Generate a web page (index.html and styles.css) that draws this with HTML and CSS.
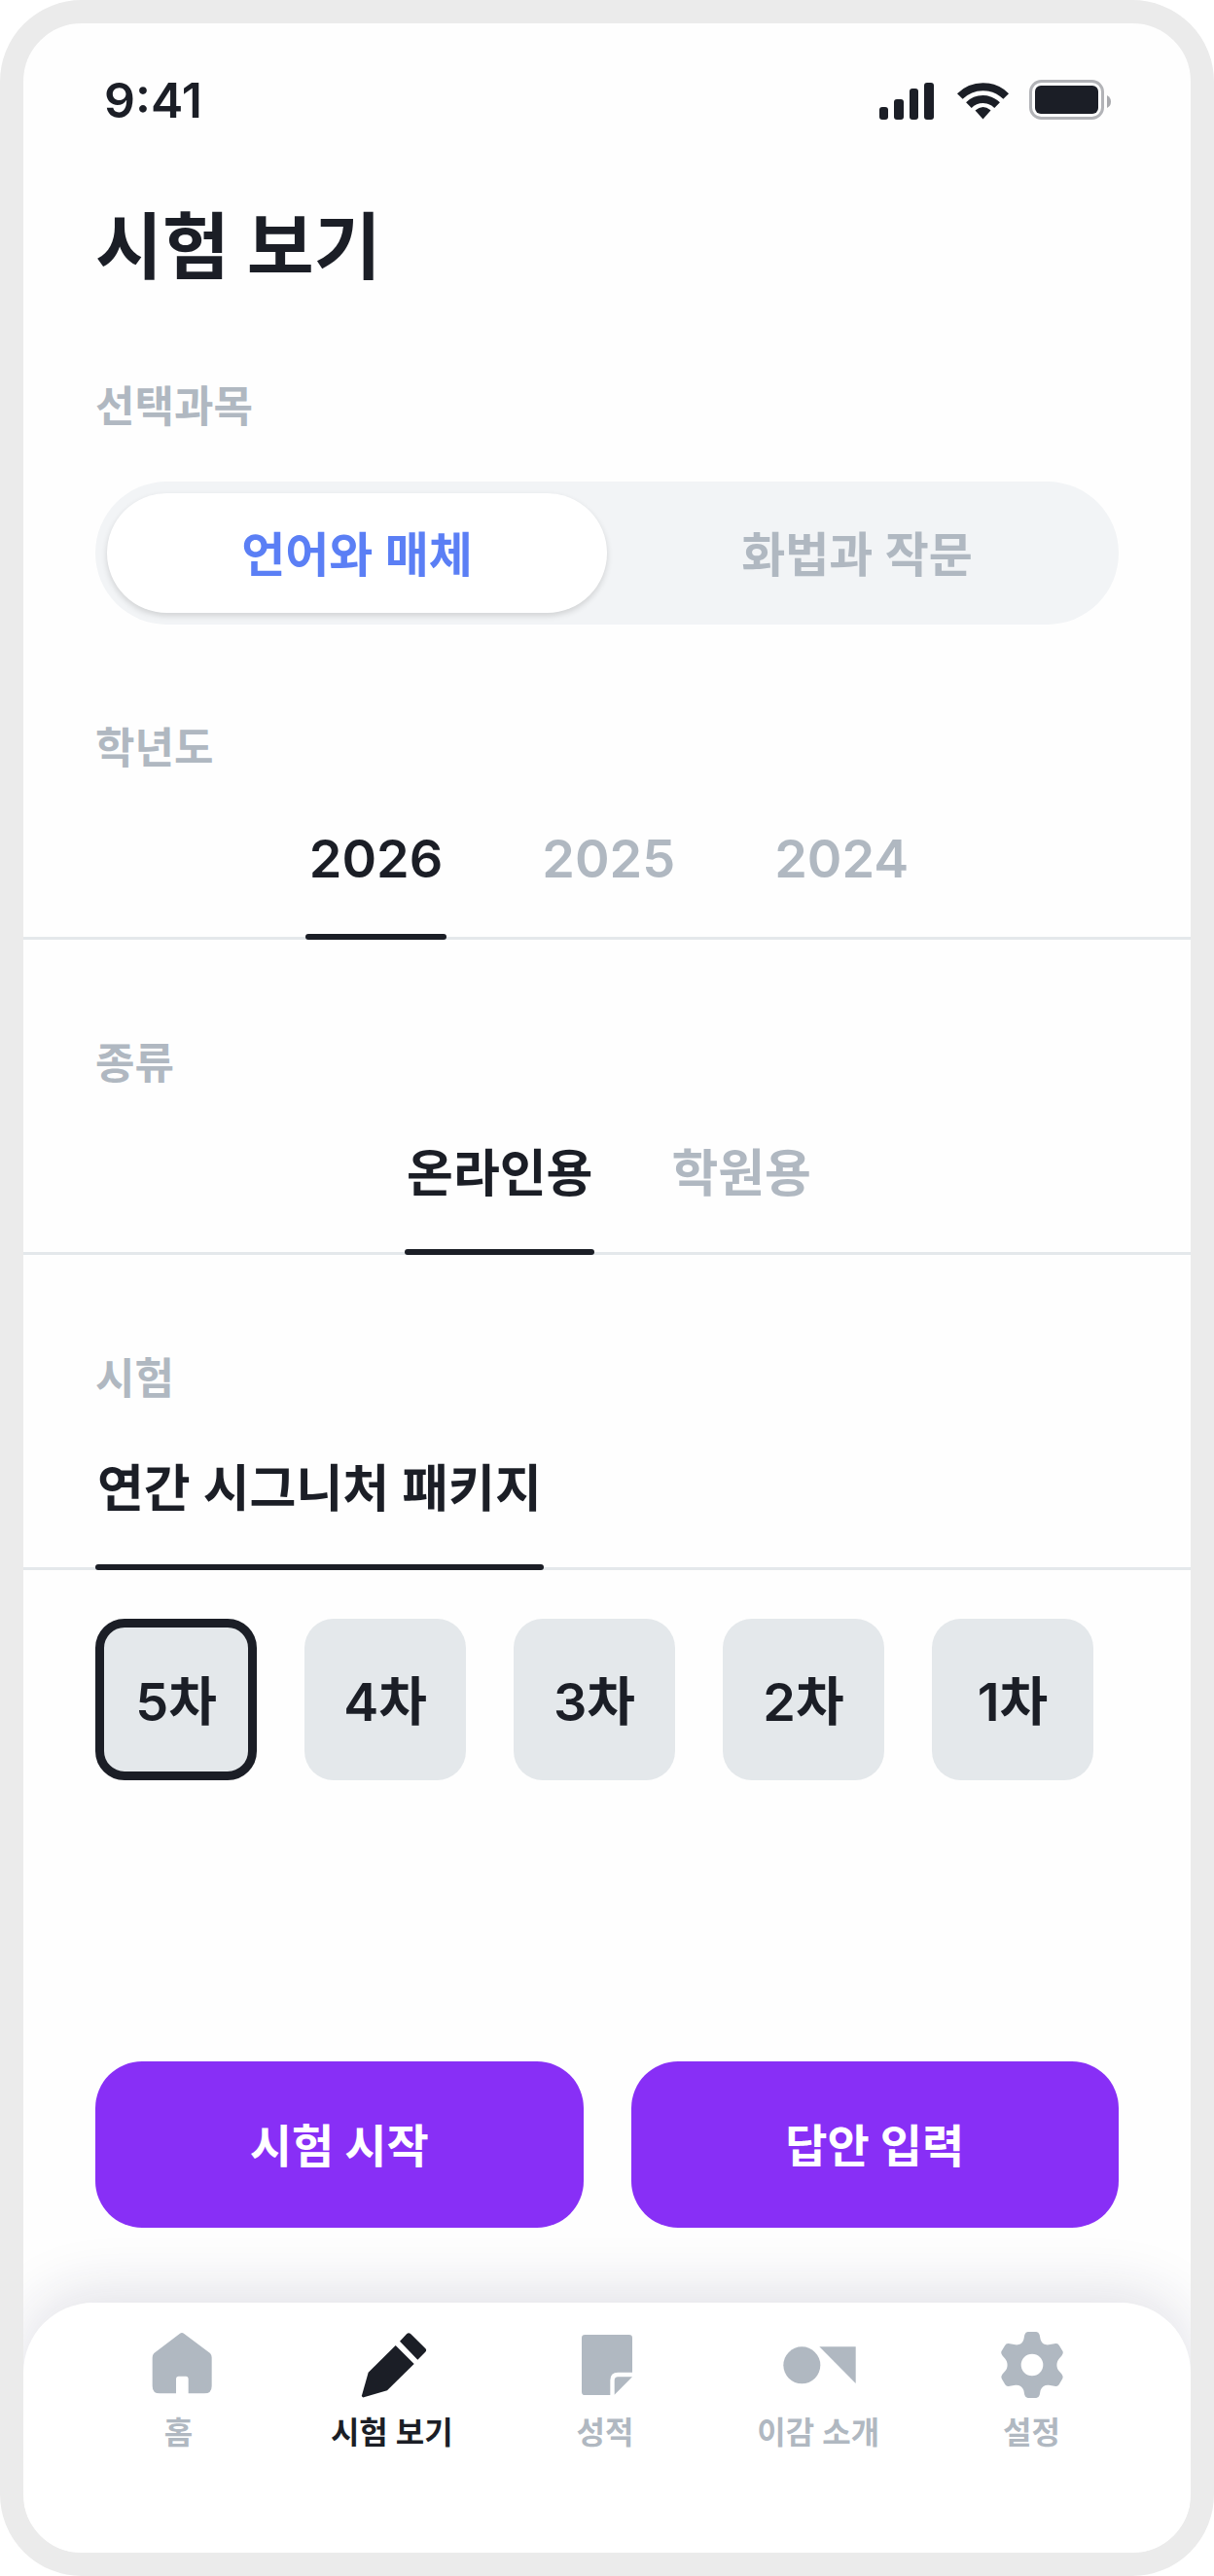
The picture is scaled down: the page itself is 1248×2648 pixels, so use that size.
FILE: index.html
```html
<!DOCTYPE html>
<html lang="ko">
  <head>
    <meta charset="UTF-8">
    <meta name="viewport" content="width=device-width, initial-scale=1.0">
    <title>시험 보기</title>
    <link rel="stylesheet" href="styles.css">
  </head>
  <body>
  <div class="phone">
    <div class="status-bar">
      <span class="time">9:41</span>
      <svg class="status-icons" viewBox="0 0 240 42" aria-hidden="true">
        <!-- signal -->
        <rect x="0" y="28" width="9" height="13" rx="3"/>
        <rect x="15" y="20" width="10" height="21" rx="3"/>
        <rect x="31" y="9" width="9" height="32" rx="3"/>
        <rect x="46" y="3" width="10" height="38" rx="3"/>
        <!-- wifi -->
        <path class="wave" d="M82.8 17A33.5 33.5 0 0 1 130.2 17M91.9 26.1A20.7 20.7 0 0 1 121.1 26.1"/>
        <path d="M106.5 40.5L98.5 31.5Q106.5 24.5 114.5 31.5Z"/>
        <!-- battery -->
        <rect class="battery" x="155.500" y="1.500" width="74" height="38" rx="11"/>
        <rect x="160" y="6" width="65" height="29" rx="6"/>
        <path class="battery-cap" d="M234 16Q238 18 238 22.500T234 29Z"/>
      </svg>
    </div>

    <main class="content">
      <h1>시험 보기</h1>

      <section class="group">
        <h2>선택과목</h2>
        <div class="segment">
          <button type="button" class="segment-item active">언어와 매체</button>
          <button type="button" class="segment-item">화법과 작문</button>
        </div>
      </section>

      <section class="group">
        <h2>학년도</h2>
        <div class="tabs years">
          <button type="button" class="tab active">2026</button>
          <button type="button" class="tab">2025</button>
          <button type="button" class="tab">2024</button>
        </div>
      </section>

      <section class="group">
        <h2>종류</h2>
        <div class="tabs">
          <button type="button" class="tab active">온라인용</button>
          <button type="button" class="tab">학원용</button>
        </div>
      </section>

      <section class="group">
        <h2>시험</h2>
        <div class="tabs tabs-left">
          <button type="button" class="tab active">연간 시그니처 패키지</button>
        </div>
        <div class="rounds">
          <button type="button" class="round active">5차</button>
          <button type="button" class="round">4차</button>
          <button type="button" class="round">3차</button>
          <button type="button" class="round">2차</button>
          <button type="button" class="round">1차</button>
        </div>
      </section>

      <div class="actions">
        <button type="button" class="action">시험 시작</button>
        <button type="button" class="action">답안 입력</button>
      </div>
    </main>

    <nav class="bottom-nav">
      <a href="#home" class="nav-item">
        <svg viewBox="0 0 240 216" aria-hidden="true">
          <path d="M122 9Q129 3 136 9L216 69Q221 74 221 82V170Q221 193 198 193H149V149Q149 140 141 140H119Q111 140 111 149V193H61Q38 193 38 170V82Q38 74 43 69Z"/>
        </svg>
        <span>홈</span>
      </a>
      <a href="#exam" class="nav-item active">
        <svg viewBox="0 0 240 216" aria-hidden="true">
          <path d="M144 32L165 10Q171 3 178 10L222 53Q229 59 222 66L199 89Z"/>
          <path d="M131 45L188 102L105 184L33 205Q26 206 27 199L47 128Z"/>
        </svg>
        <span>시험 보기</span>
      </a>
      <a href="#score" class="nav-item">
        <svg viewBox="0 0 240 216" aria-hidden="true">
          <path d="M58 12H194Q204 12 204 22V128H160Q136 128 136 152V198H58Q48 198 48 188V22Q48 12 58 12Z"/>
          <path d="M160 142H204L149 197V153Q149 142 160 142Z"/>
        </svg>
        <span>성적</span>
      </a>
      <a href="#about" class="nav-item">
        <svg viewBox="0 0 240 216" aria-hidden="true">
          <circle cx="70" cy="106" r="57"/>
          <path d="M124 49H236V162Z"/>
        </svg>
        <span>이감 소개</span>
      </a>
      <a href="#settings" class="nav-item">
        <svg viewBox="0 0 240 216" aria-hidden="true">
          <path fill-rule="evenodd" d="M110 3H136Q143 3 146 12L149 27C153 40 164 44 174 43L196 39Q203 38 207 46L218 64Q220 70 215 76L206 86C197 97 197 113 206 124L215 134Q220 141 217 147L206 166Q202 172 196 171L174 167C164 166 153 171 149 183L146 198Q143 207 136 207H110Q103 207 100 198L97 183C93 171 82 166 72 167L50 171Q44 172 40 166L29 147Q26 141 31 134L40 124C49 113 49 97 40 86L31 76Q26 70 28 64L39 46Q43 38 50 39L72 43C82 44 93 40 97 27L100 12Q103 3 110 3ZM123 71A34 34 0 1 0 123 139A34 34 0 1 0 123 71Z"/>
        </svg>
        <span>설정</span>
      </a>
    </nav>
  </div>
  </body>
</html>
```

FILE: styles.css
```css
:root {
  --ink: #1b1e26;
  --muted: #b0b8c1;
  --line: #e4e8eb;
  --primary: #882ff6;
  --blue: #5b7ff5;
  --page: #fefefe;
}

* {
  margin: 0;
  padding: 0;
  box-sizing: border-box;
}

body {
  background: #ffffff;
  color: var(--ink);
  font-family: Inter, "Noto Sans CJK KR", sans-serif;
  font-weight: 600;
}

button {
  border: none;
  background: none;
  font: inherit;
  color: inherit;
  white-space: nowrap;
  cursor: pointer;
}

.phone {
  display: flex;
  flex-direction: column;
  min-height: 100vh;
  border: 24px solid #ebebeb;
  border-radius: 84px;
  background: var(--page);
  overflow: hidden;
}

/* status bar */
.status-bar {
  display: flex;
  justify-content: space-between;
  align-items: center;
  padding: 58px 80px 0 83px;
}

.time {
  font-size: 50px;
  line-height: 42px;
}

.status-icons {
  width: 240px;
  height: 42px;
  fill: var(--ink);
}

.status-icons .wave {
  fill: none;
  stroke: var(--ink);
  stroke-width: 8;
}

.status-icons .battery {
  fill: none;
  stroke: #b2b3b7;
  stroke-width: 3;
}

.status-icons .battery-cap {
  fill: #a9aaae;
}

/* content */
.content {
  flex: 1;
  display: flex;
  flex-direction: column;
  padding-top: 86px;
}

h1 {
  padding: 0 74px;
  font-size: 75px;
  line-height: 88px;
  font-weight: 700;
}

.group {
  margin-top: 99px;
}

h1 + .group {
  margin-top: 92px;
}

h2 {
  padding: 0 74px;
  font-size: 44px;
  line-height: 56px;
  font-weight: 600;
  color: var(--muted);
}

.segment {
  display: flex;
  margin: 49px 74px 0;
  padding: 12px;
  border-radius: 80px;
  background: #f2f4f6;
}

.segment-item {
  flex: 1;
  border-radius: 64px;
  padding: 32px 0 28px;
  font-size: 49px;
  line-height: 63px;
  color: var(--muted);
}

.segment-item.active {
  background: #ffffff;
  color: var(--blue);
  box-shadow: 0 3px 6px rgba(0, 0, 0, 0.14);
}

.tabs {
  display: flex;
  justify-content: center;
  gap: 77px;
  padding: 54px 70px 0 74px;
  box-shadow: inset 0 -3px 0 var(--line);
  font-size: 52px;
}

.tabs.years {
  gap: 94px;
  font-size: 54px;
}

.tabs.tabs-left {
  justify-content: flex-start;
}

.tab {
  position: relative;
  padding: 0 2px 51px;
  line-height: 64px;
  color: var(--muted);
}

.years .tab {
  padding: 0 4px 51px;
}

.tab.active {
  color: var(--ink);
}

.tab.active::after {
  content: "";
  position: absolute;
  left: 0;
  right: 0;
  bottom: 0;
  height: 6px;
  border-radius: 3px;
  background: var(--ink);
}

.rounds {
  display: flex;
  gap: 49px;
  padding: 50px 74px 0;
}

.round {
  width: 166px;
  height: 166px;
  padding-top: 6px;
  border-radius: 30px;
  background: var(--line);
  font-size: 54px;
  line-height: 64px;
}

.round.active {
  border: 9px solid var(--ink);
}

.actions {
  display: flex;
  gap: 49px;
  margin-top: auto;
  padding: 77px 74px;
}

.action {
  flex: 1;
  padding: 55px 0 53px;
  border-radius: 48px;
  background: var(--primary);
  color: #ffffff;
  font-size: 47px;
  line-height: 63px;
  font-weight: 700;
}

/* bottom navigation */
.bottom-nav {
  display: grid;
  grid-template-columns: repeat(5, 1fr);
  padding: 29px 54px 103px 50px;
  border-radius: 72px 72px 0 0;
  background: #ffffff;
  box-shadow: 0 -12px 60px rgba(30, 34, 80, 0.13);
}

.nav-item {
  display: flex;
  flex-direction: column;
  align-items: center;
  gap: 13px;
  color: var(--muted);
  font-size: 32px;
  line-height: 40px;
  text-decoration: none;
  white-space: nowrap;
}

.nav-item svg {
  width: 80px;
  height: 72px;
  fill: currentColor;
}

.nav-item.active {
  color: var(--ink);
}
```
